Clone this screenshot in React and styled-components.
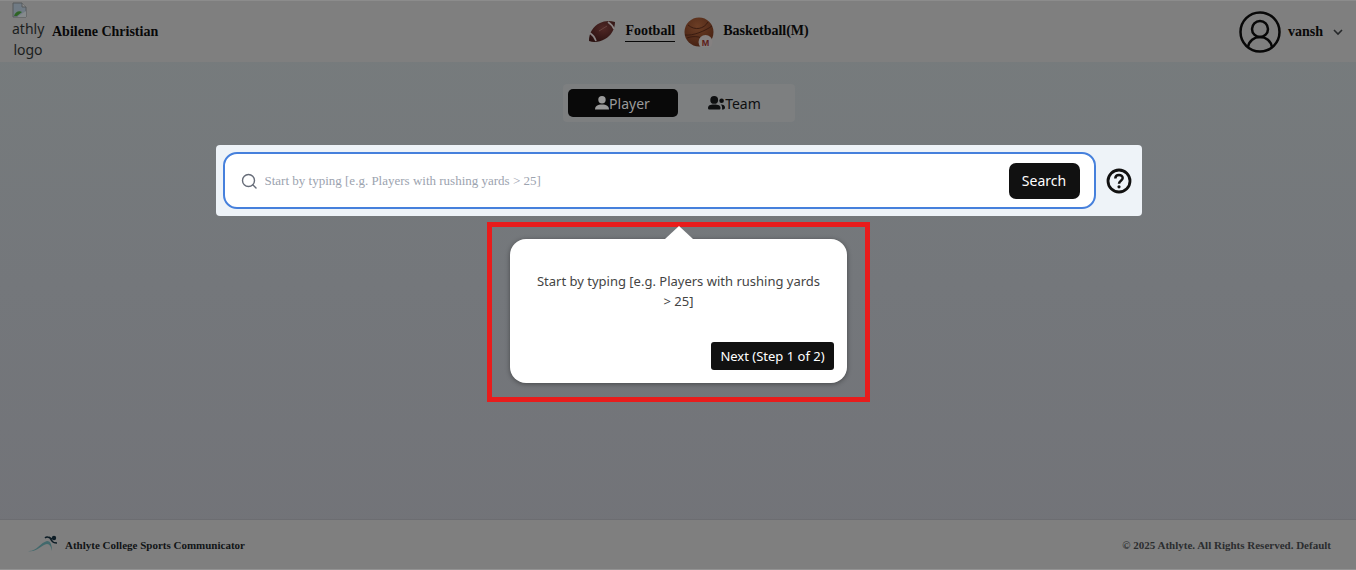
import React from "react";
import styled, { createGlobalStyle } from "styled-components";

const ui = `"Noto Sans", sans-serif`;
const serif = `"Liberation Serif", "Times New Roman", serif`;

const GlobalStyle = createGlobalStyle`
  *, *::before, *::after { box-sizing: border-box; }
  body { margin: 0; font-family: ${ui}; font-size: 14px; color: #111; }
  button, input { font: inherit; }
  p { margin: 0; }
`;

const Page = styled.div`
  min-height: 100vh;
  display: flex;
  flex-direction: column;
  background: linear-gradient(#777c7d, #74777b 50%, #727378);
`;

const Header = styled.header`
  display: flex;
  align-items: center;
  justify-content: space-between;
  height: 62px;
  padding: 0 10px 0 12px;
  background: #7f7f7f;
  border-top: 1px solid #8c8c8c;
  font: bold 14px/20px ${serif};
  color: #080808;
`;

const Brand = styled.div`
  display: flex;
  align-items: center;
  gap: 8px;
`;

const MissingLogo = styled.div`
  width: 32px;
  height: 60px;
  font: 14px/21px ${ui};
  text-align: center;
  color: #1b1e20;
`;

const LogoAlt = styled.span`
  display: block;
`;

const BrokenIcon = styled.svg`
  display: block;
  width: 16px;
  height: 16px;
`;

const Sports = styled.nav`
  display: flex;
  align-items: center;
  gap: 9px;
`;

const SportLink = styled.a`
  display: flex;
  align-items: center;
  gap: 9px;
  color: inherit;
  text-decoration: none;
`;

const SportName = styled.span`
  border-bottom: 1px solid ${(p) => (p.$active ? "#080808" : "transparent")};
`;

const Account = styled.button`
  display: flex;
  align-items: center;
  gap: 7px;
  padding: 0;
  border: 0;
  background: none;
  color: inherit;
`;

const Main = styled.main`
  flex: 1;
  display: flex;
  flex-direction: column;
  align-items: center;
  padding: 22px 16px 22px 17px;
`;

const Tabs = styled.div`
  display: flex;
  gap: 2px;
  padding: 5px;
  margin-bottom: 23px;
  border-radius: 4px;
  background: #7d7f80;
`;

const Tab = styled.button`
  display: flex;
  align-items: center;
  justify-content: center;
  width: 110px;
  height: 28px;
  padding: 0;
  border: 0;
  border-radius: 5px;
  background: ${(p) => (p.$active ? "#090909" : "transparent")};
  color: ${(p) => (p.$active ? "#9a9a9a" : "#0e0f10")};
`;

const Spotlight = styled.form`
  display: flex;
  align-items: center;
  gap: 10px;
  width: 100%;
  max-width: 926px;
  padding: 7px 10px 7px 7px;
  border-radius: 4px;
  background: #eef3f8;
`;

const SearchBox = styled.div`
  flex: 1;
  display: flex;
  align-items: center;
  gap: 8px;
  height: 57px;
  padding: 0 14px 0 16px;
  border: 2px solid #4680dc;
  border-radius: 14px;
  background: #fff;
`;

const SearchInput = styled.input`
  flex: 1;
  min-width: 0;
  padding: 0;
  border: 0;
  outline: 0;
  background: none;
  font: 13px/20px ${serif};
  color: #111;
  &::placeholder { color: #9ca3af; opacity: 1; }
`;

const SearchButton = styled.button`
  width: 71px;
  height: 36px;
  padding: 0;
  border: 0;
  border-radius: 7px;
  background: #111;
  color: #fff;
`;

const HelpButton = styled.button`
  display: flex;
  padding: 0;
  border: 0;
  background: none;
  color: #111;
`;

const Callout = styled.section`
  margin-top: 6px;
  padding: 12px 18px 14px;
  border: 5px solid #e81c1c;
`;

const Tooltip = styled.div`
  position: relative;
  display: flex;
  flex-direction: column;
  width: 337px;
  padding: 32px 13px 13px;
  border-radius: 16px;
  background: #fff;
  box-shadow: 0 1px 5px rgba(0, 0, 0, 0.4);
  &::before {
    content: "";
    position: absolute;
    bottom: 100%;
    left: 50%;
    transform: translateX(-50%);
    border: 14px solid transparent;
    border-top: 0;
    border-bottom-color: #fff;
    border-bottom-width: 13px;
  }
`;

const TooltipText = styled.p`
  padding: 0 12px;
  font-size: 13px;
  line-height: 20px;
  text-align: center;
  color: #444;
`;

const NextButton = styled.button`
  align-self: flex-end;
  width: 123px;
  height: 28px;
  margin-top: 31px;
  padding: 0;
  border: 0;
  border-radius: 3px;
  background: #111;
  color: #fff;
  font-size: 13px;
`;

const Footer = styled.footer`
  display: flex;
  align-items: center;
  justify-content: space-between;
  height: 51px;
  padding: 0 25px 0 27px;
  border-top: 1px solid #6c6d71;
  border-bottom: 1px solid #939393;
  background: #7f7f7f;
  font: bold 11px/16px ${serif};
  color: #2b2d2f;
`;

const FooterBrand = styled.div`
  display: flex;
  align-items: center;
  gap: 6px;
  color: #111416;
`;

function Football() {
  return (
    <svg width="28" height="28" viewBox="0 0 28 28" aria-hidden="true">
      <defs>
        <radialGradient id="leather" cx=".55" cy=".35" r=".7">
          <stop offset="0" stopColor="#502826" />
          <stop offset="1" stopColor="#2a1110" />
        </radialGradient>
      </defs>
      <path d="M1 23C1 15 5 8 12 5c4-2 9-3 15-1 0 7-4 14-10 17-5 3-11 4-16 2Z" fill="url(#leather)" />
      <path d="M2 15c3 2 5 5 6 8M20 4c3 2 5 4 6 7" stroke="#8a8484" strokeWidth="1.600" fill="none" />
      <path d="m11 13 8-5" stroke="#694642" strokeWidth=".9" />
    </svg>
  );
}

function Basketball() {
  return (
    <svg width="30" height="30" viewBox="0 0 30 30" aria-hidden="true">
      <defs>
        <radialGradient id="ball" cx=".45" cy=".3" r=".75">
          <stop offset="0" stopColor="#6c3e25" />
          <stop offset="1" stopColor="#452012" />
        </radialGradient>
      </defs>
      <circle cx="15" cy="15" r="14.500" fill="url(#ball)" />
      <path d="M4 8c7 6 16 4 20-3M1 18c8 1 20-4 27-9M3 21c8-3 16-1 20 4" stroke="#351a10" strokeWidth=".9" fill="none" />
      <circle cx="21.500" cy="25" r="7" fill="#858181" />
      <text x="21.500" y="29" textAnchor="middle" fontFamily="Liberation Sans, sans-serif" fontWeight="bold" fontSize="9" fill="#5c1c18">M</text>
    </svg>
  );
}

export default function App() {
  return (
    <>
      <GlobalStyle />
      <Page>
        <Header>
          <Brand>
            <MissingLogo>
              <BrokenIcon viewBox="0 0 16 16" aria-hidden="true">
                <path d="M1 1h9l4 4v10H1Z" fill="#707b85" stroke="#565a5d" />
                <path d="M10 1v4h4" fill="#8a8a8a" stroke="#565a5d" />
                <path d="M2 14c1-4 5-6 8-4l-5 4Z" fill="#2f6426" />
                <path d="m5 15 9-6v6Z" fill="#858a8c" />
              </BrokenIcon>
              <LogoAlt>athly</LogoAlt>
              <LogoAlt>logo</LogoAlt>
            </MissingLogo>
            <span>Abilene Christian</span>
          </Brand>
          <Sports>
            <SportLink href="#football">
              <Football />
              <SportName $active>Football</SportName>
            </SportLink>
            <SportLink href="#basketball">
              <Basketball />
              <SportName>Basketball(M)</SportName>
            </SportLink>
          </Sports>
          <Account type="button">
            <svg width="42" height="42" viewBox="0 0 42 42" fill="none" stroke="#080808" strokeWidth="2.500" aria-hidden="true">
              <circle cx="21" cy="21" r="19.500" />
              <circle cx="21" cy="18" r="8" />
              <path d="M9 36c1-6 6-10 12-10s11 4 12 10" />
            </svg>
            <span>vansh</span>
            <svg width="16" height="16" viewBox="0 0 16 16" fill="none" stroke="#26282a" strokeWidth="1.600" aria-hidden="true">
              <path d="m4 6 4 4 4-4" />
            </svg>
          </Account>
        </Header>
        <Main>
          <Tabs>
            <Tab type="button" $active>
              <svg width="14" height="14" viewBox="0 0 14 14" fill="currentColor" aria-hidden="true">
                <circle cx="7" cy="3.700" r="3.700" />
                <path d="M0 13.500C0 10 2.500 8.400 7 8.400s7 1.600 7 5.100Z" />
              </svg>
              Player
            </Tab>
            <Tab type="button">
              <svg width="17" height="14" viewBox="0 0 17 14" fill="currentColor" aria-hidden="true">
                <circle cx="6.200" cy="3.900" r="3.900" />
                <path d="M0 12C0 9.500 2 8.500 6.200 8.500s6.300 1 6.300 3.500c0 1.200-.600 1.600-1.600 1.600H1.600C.600 13.600 0 13.200 0 12Z" />
                <circle cx="13.600" cy="4.800" r="2.300" />
                <path d="M12.800 8.500c2.800 0 4.200 1 4.200 3 0 1.400-.900 2-3 2 .400-2 .100-3.600-1.200-5Z" />
              </svg>
              Team
            </Tab>
          </Tabs>
          <Spotlight onSubmit={(e) => e.preventDefault()}>
            <SearchBox>
              <svg width="16" height="16" viewBox="0 0 16 16" fill="none" stroke="#666c78" strokeWidth="1.400" strokeLinecap="round" aria-hidden="true">
                <circle cx="7.500" cy="7.500" r="6" />
                <path d="m12 12 3 3" />
              </svg>
              <SearchInput aria-label="Search players" placeholder="Start by typing [e.g. Players with rushing yards > 25]" />
              <SearchButton type="submit">Search</SearchButton>
            </SearchBox>
            <HelpButton type="button" aria-label="Help">
              <svg width="26" height="26" viewBox="0 0 26 26" fill="none" stroke="currentColor" strokeWidth="2.800" aria-hidden="true">
                <circle cx="13" cy="13" r="11" />
                <path d="M9.300 10.500c0-4.800 7.400-4.500 7.400-.4 0 2.600-3.700 2.700-3.700 5.600" strokeWidth="2.500" />
                <circle cx="13" cy="18.800" r="1.600" fill="currentColor" stroke="none" />
              </svg>
            </HelpButton>
          </Spotlight>
          <Callout>
            <Tooltip role="dialog" aria-label="Search tour">
              <TooltipText>Start by typing [e.g. Players with rushing yards &gt; 25]</TooltipText>
              <NextButton type="button">Next (Step 1 of 2)</NextButton>
            </Tooltip>
          </Callout>
        </Main>
        <Footer>
          <FooterBrand>
            <svg width="32" height="20" viewBox="0 0 32 20" fill="none" aria-hidden="true">
              <path d="M1 16c8 1 12-8 19-10 4 0 5 5 5 10-1-4-2-7-5-7C14 10 9 18 1 16Z" fill="#42696c" />
              <path d="M18 3c2-2 3-1 5 0l2 3c1 2 3 2 5 2M22 2l3 2" stroke="#0d1d26" strokeWidth="1.500" />
              <circle cx="27" cy="3" r="2.200" fill="#0d1d26" />
            </svg>
            <span>Athlyte College Sports Communicator</span>
          </FooterBrand>
          <span>© 2025 Athlyte. All Rights Reserved. Default</span>
        </Footer>
      </Page>
    </>
  );
}
